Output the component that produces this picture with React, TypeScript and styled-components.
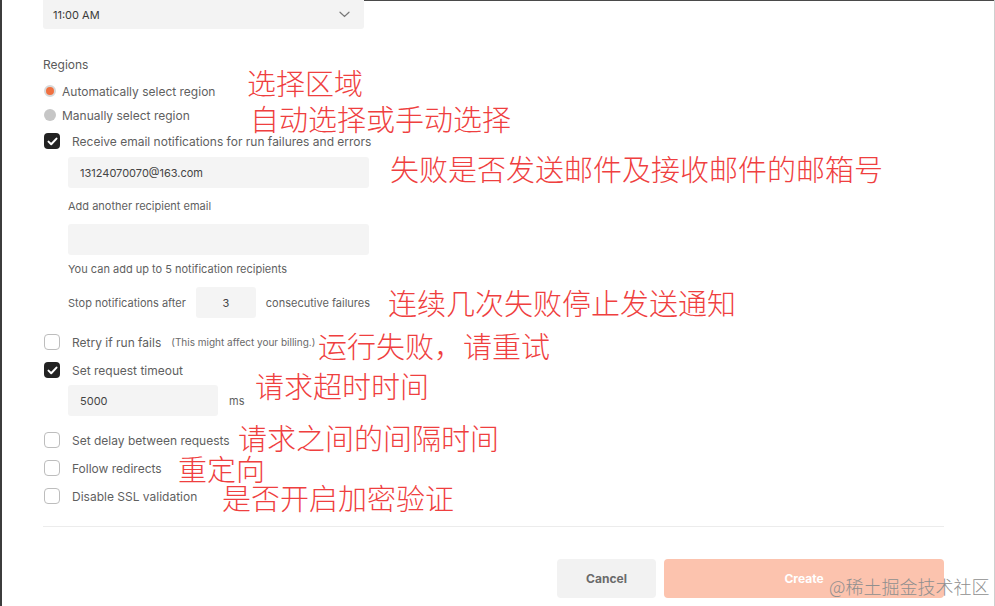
import React from 'react';
import styled, { createGlobalStyle } from 'styled-components';

const GlobalStyle = createGlobalStyle`
  html, body {
    margin: 0;
    padding: 0;
    background: #ffffff;
  }
  body {
    font-family: Inter, "Noto Sans", Arial, sans-serif;
    color: #6b6b6b;
  }
`;

const Frame = styled.div`
  position: relative;
  width: 995px;
  height: 606px;
  box-sizing: border-box;
  border-left: 2px solid #3c3c3c;
  border-right: 1px solid #cfcfcf;
  overflow: hidden;
  background: #fff;
`;

const TopEdge = styled.div`
  height: 1px;
  margin-left: 258px;
  background: #4a4a4a;
`;

const Form = styled.div`
  width: 901px;
  margin-left: 41px;
  margin-top: -1px;
  display: flex;
  flex-direction: column;
`;

const Select = styled.div`
  width: 321px;
  height: 29px;
  box-sizing: border-box;
  padding: 0 14px 0 10px;
  background: #f3f3f3;
  border-radius: 0 0 3px 3px;
  display: flex;
  align-items: center;
  justify-content: space-between;
  font-size: 11px;
  color: #3a3a3a;
`;

const SectionLabel = styled.div`
  margin-top: 28px;
  height: 16px;
  line-height: 16px;
  font-size: 12px;
  color: #5a5a5a;
`;

const RadioRow = styled.div<{ $top?: number }>`
  height: 24px;
  margin-top: ${(p) => p.$top ?? 0}px;
  display: flex;
  align-items: center;
  gap: 6px;
  font-size: 12px;
  color: #5f5f5f;
`;

const RadioDot = styled.span<{ $on?: boolean }>`
  width: 12px;
  height: 12px;
  box-sizing: border-box;
  border-radius: 50%;
  margin-left: 1px;
  background: ${(p) => (p.$on ? '#f07040' : '#c6c6c6')};
  border: ${(p) => (p.$on ? '2px solid #d8d8d8' : 'none')};
`;

const CheckRow = styled.div<{ $top?: number }>`
  height: 28px;
  margin-top: ${(p) => p.$top ?? 0}px;
  display: flex;
  align-items: center;
  gap: 12px;
  font-size: 12px;
  color: #5f5f5f;
`;

const Box = styled.span<{ $on?: boolean }>`
  width: 16px;
  height: 16px;
  margin-left: 1px;
  box-sizing: border-box;
  border-radius: 4px;
  flex: none;
  display: flex;
  align-items: center;
  justify-content: center;
  background: ${(p) => (p.$on ? '#222222' : '#ffffff')};
  border: ${(p) => (p.$on ? 'none' : '1px solid #bdbdbd')};
`;

const Note = styled.span`
  font-size: 10px;
  color: #6a6a6a;
  margin-left: -2px;
`;

const Indent = styled.div`
  margin-left: 25px;
  display: flex;
  flex-direction: column;
`;

const Input = styled.div<{ $w: number; $center?: boolean; $top?: number }>`
  width: ${(p) => p.$w}px;
  height: 31px;
  margin-top: ${(p) => p.$top ?? 0}px;
  box-sizing: border-box;
  padding: 0 12px;
  background: #f4f4f4;
  border-radius: 3px;
  display: flex;
  align-items: center;
  justify-content: ${(p) => (p.$center ? 'center' : 'flex-start')};
  font-size: 11px;
  color: #444;
  flex: none;
`;

const Hint = styled.div<{ $top: number }>`
  margin-top: ${(p) => p.$top}px;
  height: 16px;
  line-height: 16px;
  font-size: 11px;
  color: #5f5f5f;
`;

const InlineRow = styled.div<{ $top?: number; $gap: number }>`
  margin-top: ${(p) => p.$top ?? 0}px;
  display: flex;
  align-items: center;
  gap: ${(p) => p.$gap}px;
  font-size: 11px;
  color: #5f5f5f;
`;

const Divider = styled.div`
  margin-top: 16px;
  height: 1px;
  background: #ececec;
`;

const Actions = styled.div`
  margin-top: 32px;
  display: flex;
  justify-content: flex-end;
  gap: 8px;
`;

const Button = styled.div<{ $primary?: boolean }>`
  width: ${(p) => (p.$primary ? 280 : 99)}px;
  height: 39px;
  border-radius: 4px;
  display: flex;
  align-items: center;
  justify-content: center;
  font-size: 12px;
  font-weight: 700;
  background: ${(p) => (p.$primary ? '#fcc3ae' : '#f2f2f2')};
  color: ${(p) => (p.$primary ? '#ffffff' : '#6a6a6a')};
`;

// red hand-written notes laid over the form
const Annotation = styled.div<{ $x: number; $y: number }>`
  position: absolute;
  left: ${(p) => p.$x}px;
  top: ${(p) => p.$y}px;
  font-family: "Noto Sans CJK SC", sans-serif;
  font-weight: 300;
  font-size: 29px;
  line-height: 29px;
  color: #ef3f3f;
  white-space: nowrap;
`;

const Watermark = styled.div`
  position: absolute;
  left: 827px;
  top: 573px;
  font-family: "Noto Sans CJK SC", sans-serif;
  font-weight: 300;
  font-size: 18px;
  color: #8f8f8f;
  white-space: nowrap;
`;

const Check = () => (
  <svg width="11" height="9" viewBox="0 0 11 9">
    <path d="M1.5 4.6 L4.2 7.2 L9.5 1.6" fill="none" stroke="#fff" strokeWidth="2" strokeLinecap="round" strokeLinejoin="round" />
  </svg>
);

const Chevron = () => (
  <svg width="11" height="7" viewBox="0 0 11 7">
    <path d="M1 1.2 L5.5 5.5 L10 1.2" fill="none" stroke="#777" strokeWidth="1.2" strokeLinecap="round" />
  </svg>
);

const notes = [
  { x: 245, y: 68, text: '选择区域' },
  { x: 248, y: 104, text: '自动选择或手动选择' },
  { x: 388, y: 154, text: '失败是否发送邮件及接收邮件的邮箱号' },
  { x: 386, y: 288, text: '连续几次失败停止发送通知' },
  { x: 316, y: 331, text: '运行失败，请重试' },
  { x: 253, y: 371, text: '请求超时时间' },
  { x: 236, y: 423, text: '请求之间的间隔时间' },
  { x: 176, y: 454, text: '重定向' },
  { x: 220, y: 483, text: '是否开启加密验证' },
];

const App = () => (
  <>
    <GlobalStyle />
    <Frame>
      <TopEdge />
      <Form>
        <Select>
          <span>11:00 AM</span>
          <Chevron />
        </Select>

        <SectionLabel>Regions</SectionLabel>
        <RadioRow $top={6}>
          <RadioDot $on />
          Automatically select region
        </RadioRow>
        <RadioRow>
          <RadioDot />
          Manually select region
        </RadioRow>

        <CheckRow>
          <Box $on>
            <Check />
          </Box>
          Receive email notifications for run failures and errors
        </CheckRow>
        <Indent>
          <Input $w={301} $top={2}>13124070070@163.com</Input>
          <Hint $top={10}>Add another recipient email</Hint>
          <Input $w={301} $top={10} />
          <Hint $top={6}>You can add up to 5 notification recipients</Hint>
          <InlineRow $top={10} $gap={10}>
            Stop notifications after
            <Input $w={60} $center>3</Input>
            consecutive failures
          </InlineRow>
        </Indent>

        <CheckRow $top={10}>
          <Box />
          Retry if run fails
          <Note>(This might affect your billing.)</Note>
        </CheckRow>
        <CheckRow>
          <Box $on>
            <Check />
          </Box>
          Set request timeout
        </CheckRow>
        <Indent>
          <InlineRow $top={1} $gap={11}>
            <Input $w={150}>5000</Input>
            ms
          </InlineRow>
        </Indent>
        <CheckRow $top={10}>
          <Box />
          Set delay between requests
        </CheckRow>
        <CheckRow>
          <Box />
          Follow redirects
        </CheckRow>
        <CheckRow>
          <Box />
          Disable SSL validation
        </CheckRow>

        <Divider />
        <Actions>
          <Button>Cancel</Button>
          <Button $primary>Create</Button>
        </Actions>
      </Form>

      {notes.map((n) => (
        <Annotation key={n.text} $x={n.x} $y={n.y}>
          {n.text}
        </Annotation>
      ))}
      <Watermark>@稀土掘金技术社区</Watermark>
    </Frame>
  </>
);

export default App;
